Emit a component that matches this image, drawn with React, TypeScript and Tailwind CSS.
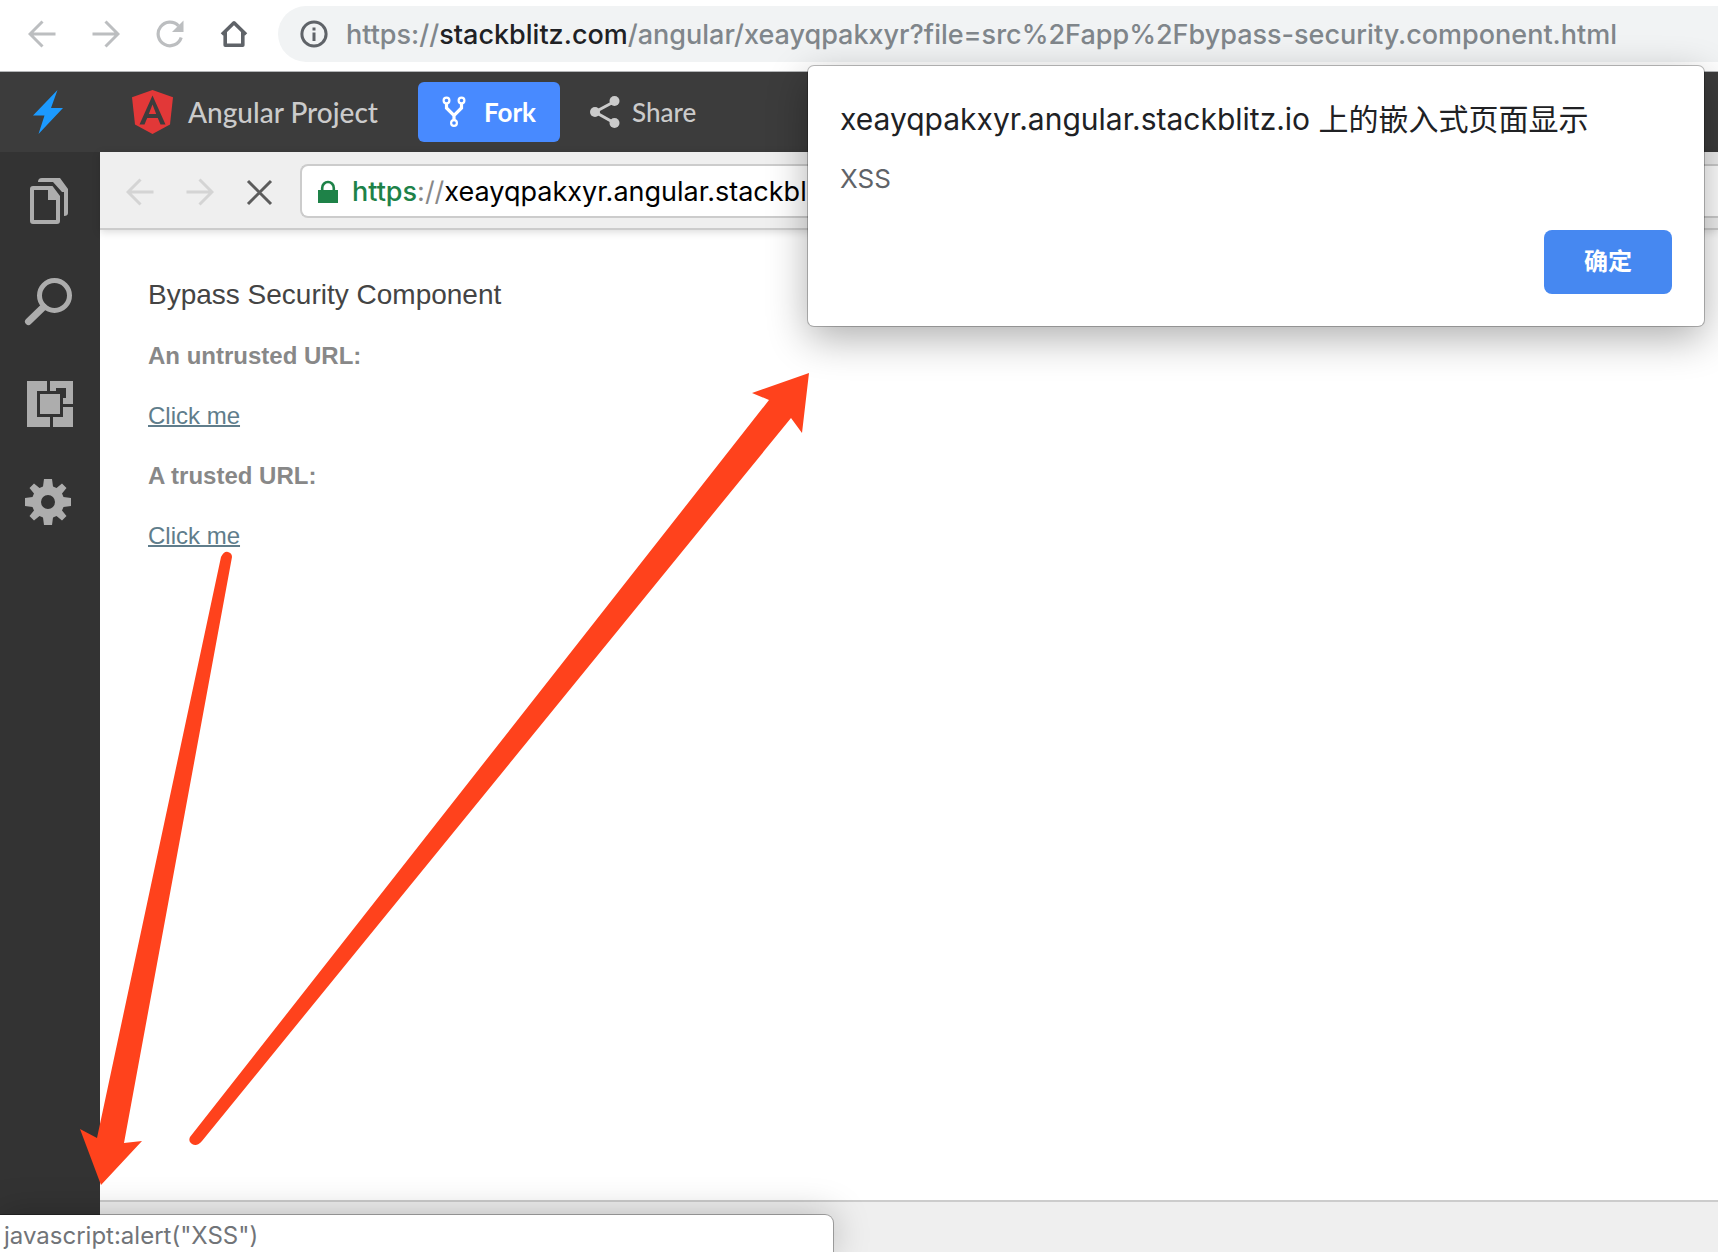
import React from "react";

const UI = "font-['Inter','Noto_Sans_CJK_SC',sans-serif]";

function Back({ className }: { className: string }) {
  return (
    <svg viewBox="0 0 28 28" className={className} fill="none" stroke="currentColor" strokeWidth="3">
      <path d="M14.5 1.5 2 14l12.5 12.5M2 14h25.5" />
    </svg>
  );
}

function Forward({ className }: { className: string }) {
  return (
    <svg viewBox="0 0 28 28" className={className} fill="none" stroke="currentColor" strokeWidth="3">
      <path d="M13.5 1.5 26 14 13.5 26.5M26 14H.5" />
    </svg>
  );
}

function BrowserBar() {
  return (
    <div className="flex h-[72px] shrink-0 items-center border-b border-[#b4b6b8] bg-white pb-[3px]">
      <div className="flex items-center gap-9 pl-7 text-[#bcbec0]">
        <button aria-label="Back" className="block">
          <Back className="size-7" />
        </button>
        <button aria-label="Forward" className="block">
          <Forward className="size-7" />
        </button>
        <button aria-label="Reload" className="block">
          <svg viewBox="0 0 28 28" className="size-7" fill="none">
            <path d="M25.2 17.5A11.8 11.8 0 1 1 22.5 5.800" stroke="currentColor" strokeWidth="3.200" />
            <path d="M27.500 .5V12H16z" fill="currentColor" />
          </svg>
        </button>
        <button aria-label="Home" className="block text-[#5f6368]">
          <svg viewBox="0 0 28 28" className="size-7" fill="none" stroke="currentColor" strokeWidth="3.600" strokeLinejoin="round">
            <path d="M2 14.500 14 2.800l12 11.700" />
            <path d="M5.200 12v13.200h17.600V12" />
          </svg>
        </button>
      </div>
      <div className="ml-[30px] flex h-14 min-w-0 flex-1 items-center rounded-l-full bg-[#f1f3f4] pl-[22px]">
        <svg viewBox="0 0 28 28" className="size-7 shrink-0 text-[#5f6368]" fill="none">
          <circle cx="14" cy="14" r="12.100" stroke="currentColor" strokeWidth="3" />
          <path d="M12.500 7.500h3v3h-3zM12.500 12.500h3v8.500h-3z" fill="currentColor" />
        </svg>
        <div role="textbox" aria-label="Address" className={`ml-[18px] whitespace-nowrap pt-0.5 text-[27px] font-medium leading-8 text-[#80868b] ${UI}`}>
          https://<span className="text-[#202124]">stackblitz.com</span>
          /angular/xeayqpakxyr?file=src%2Fapp%2Fbypass-security.component.html
        </div>
      </div>
    </div>
  );
}

function Header() {
  return (
    <header className="flex h-20 shrink-0 items-center bg-[#3c3c3c] font-['Lato',sans-serif] text-[28px] font-medium leading-8 text-[#cbcbcb]">
      <div className="flex w-[130px] items-center pl-8">
        <svg viewBox="0 0 32 46" className="h-[46px] w-8" fill="#1c9aff">
          <path d="M25.500 1 1 26.500h11.500L6.500 45 31 19H19z" />
        </svg>
      </div>
      <svg viewBox="0 0 44 46" className="h-[46px] w-11">
        <path d="M22.500 1 43 8.200 40 35.500 22.500 45 5 35.500 2 8.200z" fill="#e23838" />
        <path d="M22.500 6.500 9.500 35.500H14.500L17.200 29H27.800L30.500 35.500H35.500zM22.500 15.500 26.200 25H18.800z" fill="#3c3c3c" fillRule="evenodd" />
      </svg>
      <span className="ml-3.5 whitespace-nowrap">Angular Project</span>
      <button className="ml-10 flex h-[60px] items-center rounded-md bg-[#488aff] px-6 font-bold text-white">
        <svg viewBox="0 0 24 32" className="h-8 w-6" fill="none" stroke="currentColor">
          <g strokeWidth="2.200">
            <circle cx="4.500" cy="4.500" r="2.900" />
            <circle cx="19.500" cy="4.500" r="2.900" />
            <circle cx="12" cy="27" r="2.900" />
          </g>
          <path d="M4.500 8v4L12 19.500 19.500 12V8M12 19v5" strokeWidth="3.200" />
        </svg>
        <span className="ml-[18px] text-[26px]">Fork</span>
      </button>
      <button className="ml-7 flex items-center">
        <svg viewBox="0 0 32 34" className="h-[34px] w-8" fill="currentColor">
          <path d="M26.500 6.500 7 17l19.500 11" fill="none" stroke="currentColor" strokeWidth="3" />
          <circle cx="26.500" cy="6" r="5" />
          <circle cx="7" cy="17" r="5" />
          <circle cx="26.500" cy="28" r="5" />
        </svg>
        <span className="ml-3 text-[26px]">Share</span>
      </button>
    </header>
  );
}

function Sidebar() {
  return (
    <nav className="flex w-[100px] shrink-0 flex-col bg-[#333333] text-[#adadad]">
      <button aria-label="Files">
        <svg viewBox="0 152 100 100" className="size-[100px]" fill="currentColor">
          <path
            fillRule="evenodd"
            d="M33 186h19.500L60 196v25q0 3-3 3H33q-3 0-3-3v-32q0-3 3-3zM34 190v30h22v-20h-8v-10z"
          />
          <path d="M38 182q0-4 4-4h18l8 11v24q0 3-4 3v-24h-2l-9-10z" />
        </svg>
      </button>
      <button aria-label="Search">
        <svg viewBox="0 252 100 100" className="size-[100px]" fill="none" stroke="currentColor">
          <circle cx="54.500" cy="295.500" r="15" strokeWidth="5" />
          <path d="M43.500 307 28.500 321.500" strokeWidth="7" strokeLinecap="round" />
        </svg>
      </button>
      <button aria-label="Extensions">
        <svg viewBox="0 352 100 100" className="size-[100px]" fill="currentColor">
          <path d="M27 381h20v10H37v26h13v10H27z" />
          <path d="M50 381h23v23H63v-6h3V388H56v3h-6z" />
          <path d="M63 407h10v20H53V417h10z" />
          <path d="M40 394h20v20H40z" />
        </svg>
      </button>
      <button aria-label="Settings">
        <svg viewBox="-48 -50 100 100" className="size-[100px]" fill="currentColor">
          <path
            fillRule="evenodd"
            d="M-4-23H4L5-15.500 8.500-14 14-18.500 18.500-14 14-8.500 15.500-5 23-4V4L15.500 5 14 8.500 18.500 14 14 18.500 8.500 14 5 15.500 4 23H-4L-5 15.500-8.500 14-14 18.500-18.500 14-14 8.500-15.500 5-23 4V-4L-15.500-5-14-8.500-18.500-14-14-18.500-8.500-14-5-15.500zM0-7A7 7 0 1 0 0 7 7 7 0 1 0 0-7z"
          />
        </svg>
      </button>
    </nav>
  );
}

function Preview() {
  return (
    <main className="flex min-w-0 flex-1 flex-col bg-white">
      <div className="flex h-[78px] shrink-0 items-center border-b-2 border-[#cccccc] bg-[#efefef] pt-0.5 shadow-[0_2px_8px_rgba(0,0,0,0.15)]">
        <div className="flex items-center pl-[26px] pt-0.5 text-[#d4d4d4]">
          <button aria-label="Preview back">
            <Back className="size-7" />
          </button>
          <button aria-label="Preview forward" className="ml-8">
            <Forward className="size-7" />
          </button>
          <button aria-label="Stop" className="ml-[31px] text-[#5c5c5c]">
            <svg viewBox="0 0 28 28" className="size-7" fill="none" stroke="currentColor" strokeWidth="3">
              <path d="M3 3l23 23M26 3 3 26" />
            </svg>
          </button>
        </div>
        <div className="ml-[27px] flex h-[54px] min-w-0 flex-1 items-center rounded-l-lg border-2 border-r-0 border-[#cccccc] bg-white pl-4 pt-0.5">
          <svg viewBox="0 0 20 24" className="h-6 w-5 shrink-0" fill="#1e8248">
            <path d="M0 10h20v13H0z" />
            <path d="M4.200 11V8a5.800 6 0 0 1 11.600 0v3" fill="none" stroke="#1e8248" strokeWidth="2.600" />
          </svg>
          <div role="textbox" aria-label="Preview address" className={`ml-3.5 whitespace-nowrap text-[27px] leading-8 text-black ${UI}`}>
            <span className="font-medium text-[#1e8248]">https</span>
            <span className="text-[#888888]">://</span>xeayqpakxyr.angular.stackbl
          </div>
        </div>
      </div>
      <div className="flex-1 p-12 pt-[43px] font-['Liberation_Sans',sans-serif] text-2xl leading-[30px]">
        <h4 className="text-[28px] leading-[44px] text-[#444444]">Bypass Security Component</h4>
        <p className="mt-6 font-bold text-[#888888]">An untrusted URL:</p>
        <p className="mt-[30px]">
          <a href="#untrusted" className="text-[#607d8b] underline decoration-2">Click me</a>
        </p>
        <p className="mt-[30px] font-bold text-[#888888]">A trusted URL:</p>
        <p className="mt-[30px]">
          <a href="#trusted" className="text-[#607d8b] underline decoration-2">Click me</a>
        </p>
      </div>
      <div className="h-[52px] shrink-0 border-t-2 border-[#cccccc] bg-[#efefef]" />
    </main>
  );
}

function AlertDialog() {
  return (
    <div
      role="alertdialog"
      aria-labelledby="alert-title"
      aria-describedby="alert-message"
      className={`absolute right-3.5 top-[66px] flex w-[896px] flex-col rounded-md bg-white p-8 pt-[35px] shadow-[0_0_0_1px_rgba(0,0,0,0.25),0_12px_40px_rgba(0,0,0,0.32)] ${UI}`}
    >
      <h1 id="alert-title" className="whitespace-nowrap text-[30px] leading-9 text-[#202124]">
        xeayqpakxyr.angular.stackblitz.io 上的嵌入式页面显示
      </h1>
      <p id="alert-message" className="mt-[26px] text-[26px] leading-8 text-[#5f6368]">XSS</p>
      <button className="mt-[35px] h-16 w-32 self-end rounded-lg bg-[#4688f1] text-2xl font-bold text-white">确定</button>
    </div>
  );
}

function Arrows() {
  return (
    <svg viewBox="0 0 1718 1252" className="pointer-events-none absolute left-0 top-0 h-[1252px] w-[1718px] max-w-none" fill="#ff421c">
      <path d="M101 1185 80 1129 97 1138 221 557Q224 551 228 552 232 553 232 557L124 1143 142 1141z" />
      <path d="M809 373 752 393 769 400 190 1137Q188 1142 192 1144 197 1147 202 1141L791 418 802 433z" />
    </svg>
  );
}

export default function App() {
  return (
    <div className="relative flex min-h-screen flex-col overflow-hidden">
      <BrowserBar />
      <Header />
      <div className="flex flex-1">
        <Sidebar />
        <Preview />
      </div>
      <div className={`absolute bottom-0 left-0 h-[37px] w-[833px] rounded-tr-lg bg-white pl-1 pt-[3px] text-2xl leading-9 text-[#717478] shadow-[0_0_0_1px_rgba(0,0,0,0.3),0_0_36px_rgba(0,0,0,0.25)] ${UI}`}>
        javascript:alert("XSS")
      </div>
      <AlertDialog />
      <Arrows />
    </div>
  );
}
